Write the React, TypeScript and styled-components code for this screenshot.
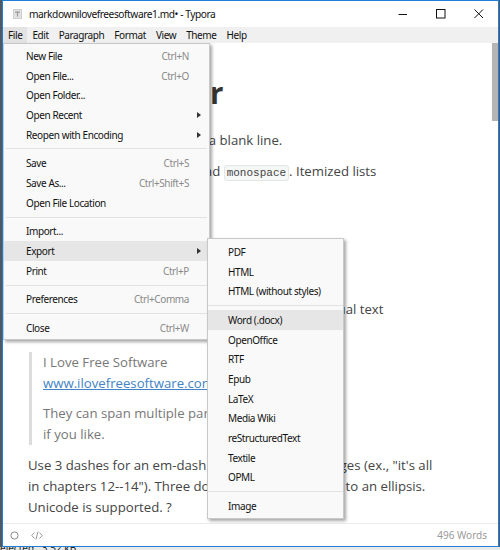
import React from 'react';
import styled, { createGlobalStyle } from 'styled-components';

const GlobalStyle = createGlobalStyle`
  html, body {
    margin: 0;
    padding: 0;
    background: #4d5966;
    overflow: hidden;
  }
`;

const Screen = styled.div`
  position: relative;
  width: 500px;
  height: 550px;
  display: flex;
  flex-direction: column;
  overflow: hidden;
`;

const Window = styled.div`
  margin-left: 2px;
  width: 497px;
  height: 547px;
  box-sizing: border-box;
  border: 1px solid #1e7fd6;
  background: #fff;
  display: flex;
  flex-direction: column;
  font-family: 'Noto Sans', 'Open Sans', sans-serif;
`;

const TitleBar = styled.div`
  height: 26px;
  display: flex;
  align-items: center;
  background: #fff;
  padding-left: 10px;
`;

const Title = styled.span`
  margin-left: 7px;
  font-size: 10.2px;
  letter-spacing: -0.45px;
  color: #111;
`;

const Controls = styled.div`
  margin-left: auto;
  display: flex;
  height: 100%;
`;

const ControlButton = styled.div`
  width: 38px;
  height: 100%;
  display: flex;
  align-items: center;
  justify-content: center;
`;

const MenuBar = styled.div`
  height: 16px;
  background: #f0f0f0;
  display: flex;
  align-items: center;
`;

const MenuBarItem = styled.div<{ $active?: boolean }>`
  height: 100%;
  display: flex;
  align-items: center;
  padding: 0 5px;
  font-size: 10px;
  letter-spacing: -0.4px;
  color: #111;
  background: ${p => (p.$active ? '#e3e3e3' : 'transparent')};
`;

const Editor = styled.div`
  flex: 1;
  position: relative;
  overflow: hidden;
  padding: 32px 50px 0 25px;
  font-family: 'Open Sans', 'Noto Sans', sans-serif;
  font-size: 13.2px;
  line-height: 21px;
  color: #444;
`;

const ScrollThumb = styled.div`
  position: absolute;
  right: 0;
  top: 0;
  width: 6px;
  height: 78px;
  background: #b5b5b5;
`;

const Heading = styled.h1`
  margin: 0 0 19px;
  font-size: 29.5px;
  line-height: 36px;
  font-weight: 700;
  color: #333;
  white-space: nowrap;
`;

const Para = styled.p`
  margin: 10px 0;
  white-space: nowrap;
`;

const Code = styled.code`
  font-family: 'Liberation Mono', 'DejaVu Sans Mono', monospace;
  font-size: 11px;
  padding: 1px 2px;
  border: 1px solid #e3e6e8;
  background: #f6f7f7;
  border-radius: 3px;
  color: #444;
`;

const List = styled.ul`
  margin: 10px 0 21px;
  padding-left: 24px;
`;

const Quote = styled.blockquote`
  margin: 11px 0 10px 1px;
  padding: 0 0 0 11px;
  border-left: 3px solid #dcdcdc;
  color: #777;
`;

const QuotePara = styled.p`
  margin: 0 0 9px;
  white-space: nowrap;
  &:last-child {
    margin-bottom: 0;
  }
`;

const Link = styled.a`
  color: #4183c4;
  text-decoration: underline;
`;

const StatusBar = styled.div`
  height: 22px;
  border-top: 1px solid #ececec;
  display: flex;
  align-items: center;
  padding: 0 11px 0 7px;
  gap: 12px;
`;

const WordCount = styled.span`
  margin-left: auto;
  font-size: 10px;
  color: #9a9a9a;
`;

const TaskStrip = styled.div`
  height: 3px;
  background: #e9e9e9;
  overflow: hidden;
  position: relative;
`;

const TaskText = styled.span`
  position: absolute;
  top: -6px;
  left: 0;
  font-family: 'Noto Sans', sans-serif;
  font-size: 10px;
  color: #222;
  white-space: pre;
`;

const Menu = styled.div<{ $left: number; $top: number; $width: number; $pad: number }>`
  position: absolute;
  left: ${p => p.$left}px;
  top: ${p => p.$top}px;
  width: ${p => p.$width}px;
  box-sizing: border-box;
  padding: ${p => p.$pad}px 0 ${p => p.$pad - 1}px;
  background: #f9f9f9;
  border: 1px solid #c8c8c8;
  box-shadow: 2px 2px 3px rgba(0, 0, 0, 0.35);
  font-family: 'Noto Sans', sans-serif;
  font-size: 10px;
  letter-spacing: -0.4px;
  color: #111;
`;

const MenuItem = styled.div<{ $active?: boolean; $indent: number }>`
  height: 19.7px;
  display: flex;
  align-items: center;
  padding: 0 8px 0 ${p => p.$indent}px;
  background: ${p => (p.$active ? '#e6e6e6' : 'transparent')};
`;

const Shortcut = styled.span`
  margin-left: auto;
  color: #8a8a8a;
  padding-right: 12px;
`;

const Arrow = styled.span`
  margin-left: auto;
  width: 0;
  height: 0;
  border-top: 3.5px solid transparent;
  border-bottom: 3.5px solid transparent;
  border-left: 4px solid #333;
`;

const Separator = styled.div<{ $inset: number }>`
  height: 9px;
  display: flex;
  align-items: center;
  padding: 0 ${p => p.$inset}px;
  &::after {
    content: '';
    flex: 1;
    height: 1px;
    background: #e2e2e2;
  }
`;

type Entry = { label: string; key?: string; sub?: boolean; active?: boolean } | 'sep';

const fileEntries: Entry[] = [
  { label: 'New File', key: 'Ctrl+N' },
  { label: 'Open File...', key: 'Ctrl+O' },
  { label: 'Open Folder...' },
  { label: 'Open Recent', sub: true },
  { label: 'Reopen with Encoding', sub: true },
  'sep',
  { label: 'Save', key: 'Ctrl+S' },
  { label: 'Save As...', key: 'Ctrl+Shift+S' },
  { label: 'Open File Location' },
  'sep',
  { label: 'Import...' },
  { label: 'Export', sub: true, active: true },
  { label: 'Print', key: 'Ctrl+P' },
  'sep',
  { label: 'Preferences', key: 'Ctrl+Comma' },
  'sep',
  { label: 'Close', key: 'Ctrl+W' },
];

const exportEntries: Entry[] = [
  { label: 'PDF' },
  { label: 'HTML' },
  { label: 'HTML (without styles)' },
  'sep',
  { label: 'Word (.docx)', active: true },
  { label: 'OpenOffice' },
  { label: 'RTF' },
  { label: 'Epub' },
  { label: 'LaTeX' },
  { label: 'Media Wiki' },
  { label: 'reStructuredText' },
  { label: 'Textile' },
  { label: 'OPML' },
  'sep',
  { label: 'Image' },
];

const MenuList: React.FC<{ entries: Entry[]; indent: number; sepInset: number }> = ({ entries, indent, sepInset }) => (
  <>
    {entries.map((e, i) =>
      e === 'sep' ? (
        <Separator key={i} $inset={sepInset} />
      ) : (
        <MenuItem key={i} $active={e.active} $indent={indent}>
          {e.label}
          {e.key && <Shortcut>{e.key}</Shortcut>}
          {e.sub && <Arrow />}
        </MenuItem>
      )
    )}
  </>
);

const menuNames = ['File', 'Edit', 'Paragraph', 'Format', 'View', 'Theme', 'Help'];

export default function App() {
  return (
    <>
      <GlobalStyle />
      <Screen>
        <Window>
          <TitleBar>
            <svg width="9" height="10" viewBox="0 0 9 10">
              <rect x="0.5" y="0.5" width="8" height="9" fill="#e2e2e2" stroke="#cfcfcf" />
              <rect x="2" y="2.5" width="5" height="1.2" fill="#9a9a9a" />
              <rect x="3.9" y="2.5" width="1.2" height="5" fill="#9a9a9a" />
            </svg>
            <Title>markdownilovefreesoftware1.md• - Typora</Title>
            <Controls>
              <ControlButton>
                <svg width="10" height="10" viewBox="0 0 10 10">
                  <line x1="0.5" y1="5.5" x2="9" y2="5.5" stroke="#111" strokeWidth="1" />
                </svg>
              </ControlButton>
              <ControlButton>
                <svg width="10" height="10" viewBox="0 0 10 10">
                  <rect x="0.5" y="0.5" width="8.5" height="8.5" fill="none" stroke="#111" strokeWidth="1" />
                </svg>
              </ControlButton>
              <ControlButton>
                <svg width="10" height="10" viewBox="0 0 10 10">
                  <path d="M0.5 0.5 L9 9 M9 0.5 L0.5 9" stroke="#111" strokeWidth="1" />
                </svg>
              </ControlButton>
            </Controls>
          </TitleBar>
          <MenuBar>
            {menuNames.map(n => (
              <MenuBarItem key={n} $active={n === 'File'}>
                {n}
              </MenuBarItem>
            ))}
          </MenuBar>
          <Editor>
            <ScrollThumb />
            <Heading>An h1 header</Heading>
            <Para>Paragraphs are separated by a blank line.</Para>
            <Para>
              2nd paragraph. <em>Italic</em>, <strong>bold</strong>, and <Code>monospace</Code>. Itemized lists
              <br />
              look like:
            </Para>
            <List>
              <li>this one</li>
              <li>that one</li>
              <li>the other one</li>
            </List>
            <Para>
              Note that --- not considering the asterisk --- the actual text
              <br />
              content starts at 4-columns in.
            </Para>
            <Quote>
              <QuotePara>
                I Love Free Software
                <br />
                <Link>www.ilovefreesoftware.com</Link>
              </QuotePara>
              <QuotePara>
                They can span multiple paragraphs,
                <br />
                if you like.
              </QuotePara>
            </Quote>
            <Para>
              Use 3 dashes for an em-dash. Use 2 dashes for ranges (ex., "it's all
              <br />
              in chapters 12--14"). Three dots ... will be converted to an ellipsis.
              <br />
              Unicode is supported. ?
            </Para>
          </Editor>
          <StatusBar>
            <svg width="9" height="9" viewBox="0 0 9 9">
              <circle cx="4.5" cy="4.5" r="3.6" fill="none" stroke="#8a8a8a" strokeWidth="1" />
            </svg>
            <svg width="12" height="9" viewBox="0 0 12 9">
              <path d="M3.5 1.5 L0.8 4.5 L3.5 7.5 M8.5 1.5 L11.2 4.5 L8.5 7.5 M7 0.5 L5 8.5" fill="none" stroke="#8a8a8a" strokeWidth="0.9" />
            </svg>
            <WordCount>496 Words</WordCount>
          </StatusBar>
        </Window>
        <TaskStrip>
          <TaskText>elected   3.52 kB</TaskText>
        </TaskStrip>
        <Menu $left={3} $top={43} $width={207} $pad={2}>
          <MenuList entries={fileEntries} indent={22} sepInset={2} />
        </Menu>
        <Menu $left={207} $top={238} $width={137} $pad={3}>
          <MenuList entries={exportEntries} indent={20} sepInset={0} />
        </Menu>
      </Screen>
    </>
  );
}
